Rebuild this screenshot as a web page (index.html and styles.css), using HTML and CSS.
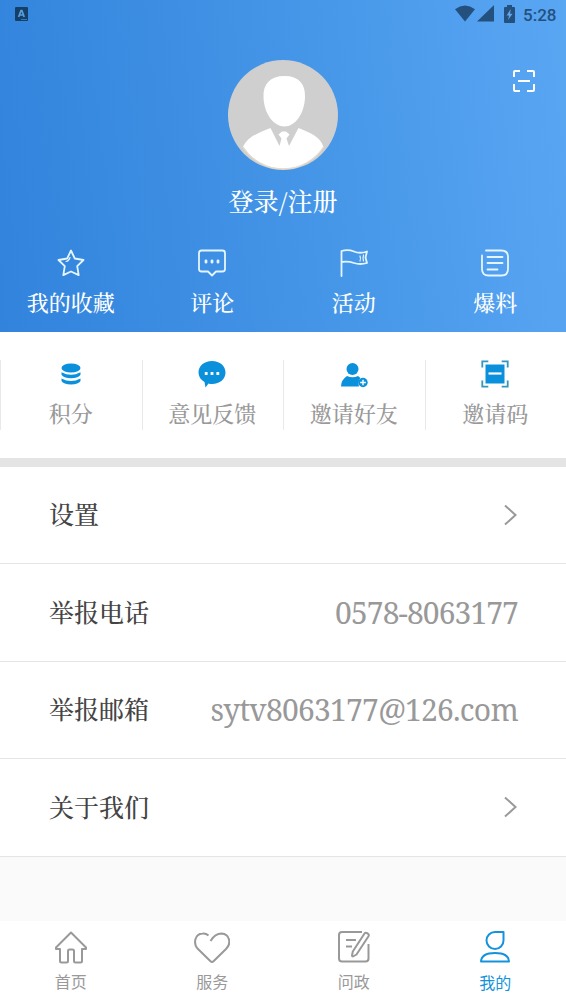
FILE: index.html
```html
<!DOCTYPE html>
<html lang="zh-CN">
<head>
<meta charset="utf-8">
<title>我的</title>
<link rel="stylesheet" href="styles.css">
</head>
<body>
<main class="app">
  <header class="hero">
    <div class="status">
      <svg class="status-app" width="13" height="14" viewBox="0 0 13 14"><rect width="13" height="14" rx="1" fill="#143f69"/><path d="M3.600 10 6 3.600h.9L9.200 10M4.600 8h4" fill="none" stroke="#5a9cda" stroke-width="1.700"/><path d="M6 12.500h6" stroke="#3478b8"/></svg>
      <div class="status-right">
        <svg width="20" height="17" viewBox="0 0 20 17"><path d="M0 4.200Q10-3 20 4.200L10 16.500Z"/></svg>
        <svg width="17" height="17" viewBox="0 0 17 17"><path d="M17 0v16.500H0Z"/></svg>
        <svg class="battery" width="11" height="18" viewBox="0 0 11 18"><path d="M3 2V0h5v2h2q1 0 1 1v14q0 1-1 1H1q-1 0-1-1V3q0-1 1-1Z"/><path d="M6.800 4 2.600 10.500h2.500L4 15l4.500-6.200H6Z" fill="#64a8e9"/></svg>
        <span class="clock">5:28</span>
      </div>
    </div>
    <svg class="scan" width="24" height="24" viewBox="0 0 24 24"><path d="M2 8V3q0-1 1-1h5M15 2h6q1 0 1 1v5M22 15v6q0 1-1 1h-6M8 22H3q-1 0-1-1v-6M6 12h12"/></svg>
    <svg class="avatar" width="110" height="110" viewBox="0 0 110 110">
      <circle cx="55" cy="55" r="55" fill="#cfcfcf"/>
      <path d="M56.500 16C71 16 77.500 24 77 37C76.500 54 67 66.500 56.500 66.500S36 54 35.500 37C35 24 42 16 56.500 16Z" fill="#fff"/>
      <path d="M15 87C20 76 31 73 42.500 68L51.500 86 53.500 78.500 50.500 74.500 54 71.500h4L61.500 74.500 58.500 78.500 61 86 70.500 68C82 73 92 76 95.500 87A48 48 0 0 1 15 87Z" fill="#fff"/>
      <path d="M15 87A48 48 0 0 0 95.500 87" fill="none" stroke="#e7dccb" stroke-width="1.200"/>
    </svg>
    <div class="login">登录/注册</div>
    <nav class="shortcuts">
      <a class="shortcut"><svg viewBox="0 0 28 28"><path d="m14 1.500 3.800 8L26.500 11l-6.300 6.200 1.500 8.900L14 22.500l-7.700 3.600 1.500-8.900L1.500 11l8.700-1.500Z"/><path d="M9 12.500q3-.6 4-4" stroke-width="1.200"/></svg><span>我的收藏</span></a>
      <a class="shortcut"><svg viewBox="0 0 28 28"><path d="M3.500 1.500h21q2.500 0 2.500 2.500v16q0 2.500-2.500 2.500H18L14 26.500 10 22.500H3.500Q1 22.500 1 20V4q0-2.500 2.500-2.500Z"/><path d="M8 11.800v1.400M14 11.800v1.400M20 11.800v1.400" stroke-width="2.800"/></svg><span>评论</span></a>
      <a class="shortcut"><svg viewBox="0 0 28 28"><path d="M1.500 27V2Q8 0 14 2.500T27 2.500L25.500 8.500 27 14Q20 16 14 14T1.500 13"/><path d="M20 7q1 2.500 0 5M23.500 6q-1 3 0 6" stroke-width="1.200"/></svg><span>活动</span></a>
      <a class="shortcut"><svg viewBox="0 0 28 28"><path d="M5 1.500h15.500q6.500 0 6.500 6.500v12q0 6.500-6.500 6.500h-13Q1 26.500 1 20V6.500M6.500 8h15M6.500 14h15M6.500 20.500h10"/></svg><span>爆料</span></a>
    </nav>
  </header>
  <nav class="tools">
    <a class="tool"><svg viewBox="0 0 28 28"><ellipse cx="14" cy="8" rx="9.500" ry="4.500"/><path d="M4.500 12.300q9.500 5 19 0v2.500q-2 3.400-9.500 3.400t-9.500-3.400ZM4.500 18.500q9.500 5 19 0V21q-2 3.400-9.500 3.400T4.500 21Z"/></svg><span>积分</span></a>
    <a class="tool"><svg viewBox="0 0 28 28"><path d="M14 1C22 1 27.500 6 27.500 12.500S22 24 14 24q-2 0-3.500-.5L7.500 27.500 6.500 22Q.5 18.500.5 12.500C.5 6 6 1 14 1Z"/><path d="M6.800 13.500h2.800M12.600 13.500h2.800M18.400 13.500h2.800" stroke="#fff" stroke-width="2.800"/></svg><span>意见反馈</span></a>
    <a class="tool"><svg viewBox="0 0 28 28"><circle cx="12.500" cy="9" r="6"/><path d="M1 26.500Q1 20 7 16q5.500 2.500 11 0l2.500 2q-3 3-1.500 8.500Z"/><circle cx="23" cy="22.500" r="4.700"/><path d="M20.200 22.500h5.600M23 19.700v5.600" stroke="#fff" stroke-width="1.400"/></svg><span>邀请好友</span></a>
    <a class="tool"><svg viewBox="0 0 28 28"><rect x="4.500" y="4.500" width="19" height="19"/><path d="M7.500 13.500h13" stroke="#fff" stroke-width="2.200"/><path d="M1.300 7.500V1.300h6M20.700 1.300h6v6.200M26.700 20.500v6.200h-6M7.300 26.700h-6v-6.200" fill="none" stroke="#3495bd" stroke-width="1.800"/></svg><span>邀请码</span></a>
  </nav>
  <section class="list">
    <div class="row"><span>设置</span><svg class="chevron" width="14" height="22" viewBox="0 0 14 22"><path d="m2 1.500 10.500 9.500L2 20.500"/></svg></div>
    <div class="row"><span>举报电话</span><span class="value phone">0578-8063177</span></div>
    <div class="row"><span>举报邮箱</span><span class="value email">sytv8063177@126.com</span></div>
    <div class="row"><span>关于我们</span><svg class="chevron" width="14" height="22" viewBox="0 0 14 22"><path d="m2 1.500 10.500 9.500L2 20.500"/></svg></div>
  </section>
  <nav class="tabs">
    <a class="tab"><svg viewBox="0 0 36 36"><path d="M18 2.500 3 17.500V19h4v12q0 1.500 1.500 1.500h5q1.500 0 1.500-1.500V21q0-1.500 1.500-1.500h3Q21 19.500 21 21v10q0 1.500 1.500 1.500h5q1.500 0 1.500-1.500V19h4v-1.500Z"/></svg><span>首页</span></a>
    <a class="tab"><svg viewBox="0 0 36 36"><path d="M16.500 11Q21 3.500 27.500 3.500C36 4 37.500 14 32 19L19.500 31.200Q18 32.500 16.500 31.200L4 19C-1 14 .5 4 8.500 3.500q3.500-.3 6 2"/></svg><span>服务</span></a>
    <a class="tab"><svg viewBox="0 0 36 36"><path d="M26 2H6Q3 2 3 5v23.500q0 3 3 3h23.500q3 0 3-3V14M10 10h10M10 16.500h6M28.500 3.500q1-1.500 3-.2t1 3L20.500 24.500l-3.500 2q-1 0-1-1l.8-4Z"/></svg><span>问政</span></a>
    <a class="tab active"><svg viewBox="0 0 36 36"><path d="M18 2h8.500v8.500A8.500 8.500 0 1 1 18 2ZM4 31.500Q4.500 23 18 23t14 8.500Z"/></svg><span>我的</span></a>
  </nav>
</main>
</body>
</html>
```
FILE: styles.css
```css
* { box-sizing: border-box; }
body { margin: 0; background: #fafafa; }
.app {
  display: flex;
  flex-direction: column;
  width: 566px;
  height: 1006px;
  font-family: "Noto Serif CJK SC", "Source Han Serif SC", "Noto Sans CJK SC", serif;
  font-weight: 500;
}
svg { display: block; flex: none; }

.hero {
  position: relative;
  display: flex;
  flex-direction: column;
  align-items: center;
  height: 331.500px;
  background: linear-gradient(83deg, #3183dc 0%, #4495e7 52%, #59a6f3 100%);
  color: #fff;
}
.status {
  display: flex;
  justify-content: space-between;
  align-items: flex-start;
  width: 100%;
  height: 60px;
  padding: 5px 10px 0 15px;
}
.status-app { margin-top: 2px; }
.status-right {
  display: flex;
  align-items: flex-start;
  gap: 2px;
  fill: #24507e;
  color: #24507e;
}
.battery { margin-left: 8px; }
.clock {
  width: 33px;
  margin-left: 6px;
  font: 500 17px/20px Roboto, sans-serif;
  white-space: nowrap;
}
.scan {
  position: absolute;
  top: 69px;
  right: 30px;
  fill: none;
  stroke: #fff;
  stroke-width: 2;
}
.login { margin-top: 13px; font-size: 25px; line-height: 34px; }
.shortcuts, .tools, .tabs {
  display: grid;
  grid-template-columns: repeat(4, 1fr);
  width: 100%;
}
.shortcuts { margin-top: 32px; }
.shortcut, .tool, .tab {
  display: flex;
  flex-direction: column;
  align-items: center;
}
.shortcut svg, .tool svg { width: 28px; height: 28px; }
.shortcut svg {
  fill: none;
  stroke: #e5f5ff;
  stroke-width: 1.8;
  stroke-linejoin: round;
  stroke-linecap: round;
}
.shortcut span, .tool span { margin-top: 9px; font-size: 22px; line-height: 32px; }

.tools { height: 126px; padding-top: 28.500px; background: #fff; }
.tool {
  height: 70px;
  box-shadow: inset 1px 0 #e9e9e9;
  color: #999;
  fill: #0b91dc;
}
.list { border-top: 9px solid #e4e4e4; }
.row {
  display: flex;
  align-items: center;
  justify-content: space-between;
  height: 97.500px;
  padding: 0 49px;
  border-bottom: 1px solid #e5e5e5;
  background: #fff;
  color: #444;
  font-size: 25px;
}
.row > span { padding-bottom: 3px; }
.row > .value {
  padding-bottom: 0;
  color: #999;
  font-family: "Noto Serif", "Noto Serif CJK SC", serif;
  font-size: 30px;
  font-weight: 400;
  white-space: nowrap;
}
.phone { margin-right: -1px; letter-spacing: -0.9px; }
.email { margin-right: -1px; letter-spacing: -0.75px; }
.chevron { fill: none; stroke: #999; stroke-width: 2; }

.tabs { height: 85px; margin-top: auto; padding-top: 9px; background: #fff; }
.tab { color: #999; font: 16px/24px "Noto Sans CJK SC", sans-serif; }
.tab svg {
  width: 36px;
  height: 36px;
  fill: none;
  stroke: currentColor;
  stroke-width: 2;
  stroke-linejoin: round;
}
.tab span { margin-top: 3px; }
.active { color: #1493dc; }
.active span { margin-top: 4px; }
```
